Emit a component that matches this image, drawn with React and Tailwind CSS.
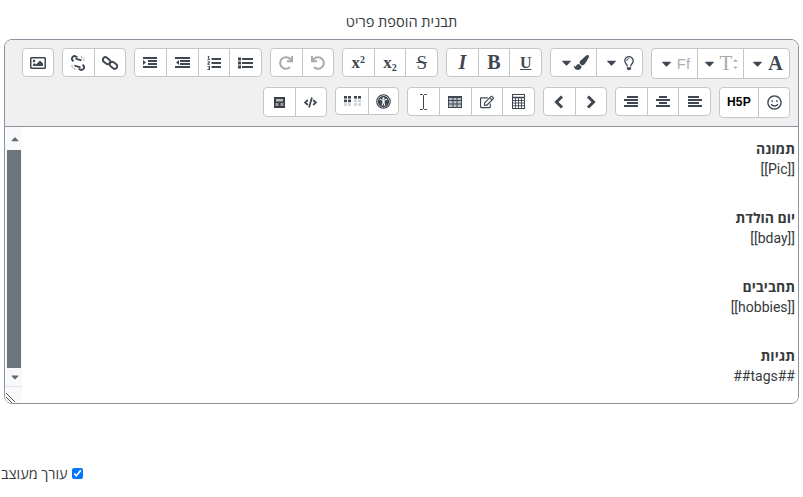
import React from "react";
import {
  FaRegImage, FaRedo, FaUndo,
  FaPaintBrush, FaRegLightbulb, FaRegSmile, FaRegEdit, FaCode, FaCaretDown, FaCaretUp, FaUniversalAccess,
} from "react-icons/fa";

const ink = "text-[#3f4752]";
const C = "#3f4752";

function Group({ w, h, children }) {
  return (
    <div className={`flex ${w} ${h} shrink-0 overflow-hidden rounded-[4px] border border-[#c6c6c6] bg-white ${ink}`}>
      {children}
    </div>
  );
}

function Btn({ children, className = "flex-1", first }) {
  return (
    <div className={`flex items-center justify-center gap-[3px] ${className} ${first ? "" : "border-l border-[#c6c6c6]"}`}>
      {children}
    </div>
  );
}

const Caret = () => <FaCaretDown className="text-[15px]" />;

function Bars({ bars, w = 14, h = 11, extra }) {
  return (
    <svg width={w} height={h} viewBox={`0 0 ${w} ${h}`} fill={C}>
      {bars.map(([x, y, bw], i) => (
        <rect key={i} x={x} y={y} width={bw} height="2" />
      ))}
      {extra}
    </svg>
  );
}

const AlignRight = () => <Bars bars={[[3, 0, 11], [0, 3, 14], [3, 6, 11], [0, 9, 14]]} />;
const AlignCenter = () => <Bars bars={[[3, 0, 8], [0, 3, 14], [3, 6, 8], [0, 9, 14]]} />;
const AlignLeft = () => <Bars bars={[[0, 0, 11], [0, 3, 14], [0, 6, 11], [0, 9, 14]]} />;
const Indent = () => <Bars bars={[[0, 0, 14], [5, 3, 9], [5, 6, 9], [0, 9, 14]]} extra={<path d="M0 3l3 2.5L0 8z" />} />;
const Outdent = () => <Bars bars={[[0, 0, 15], [5, 3, 10], [5, 6, 10], [0, 9, 15]]} w={15} extra={<path d="M4 3L1 5.5 4 8z" />} />;
const ListUl = () => (
  <Bars w={15} bars={[[4, 1, 11], [4, 5, 11], [4, 9, 11]]} extra={<><rect x="0" y="0.5" width="3" height="3" /><rect x="0" y="4.5" width="3" height="3" /><rect x="0" y="8.5" width="3" height="3" /></>} h={12} />
);
const ListOl = () => (
  <svg width="14" height="14" viewBox="0 0 14 14" fill={C}>
    <rect x="4.5" y="2" width="9.5" height="2" /><rect x="4.5" y="6" width="9.5" height="2" /><rect x="4.5" y="10" width="9.5" height="2" />
    <path d="M1 0h1.2v3.2H3V4H.4v-.8h.8V1H.6zM.4 5.2h2.6v1.2L1.6 8H3v.8H.4v-1L2 6H.4zM.4 10h2.6v4H.4v-.8H2V12.4H1v-.7h1V10.8H.4z" />
  </svg>
);

function Chain({ broken }) {
  return (
    <svg width="16" height="16" viewBox="0 0 16 16" fill="none" stroke={C} strokeWidth="1.9">
      {broken ? (
        <>
          <path d="M7.4 2.2 6 1.6a2.6 2.6 0 0 0-3.6 3.6l1 1.2" />
          <path d="M8.6 13.8l1.4.6a2.6 2.6 0 0 0 3.6-3.6l-1-1.2" />
          <path d="M5.5 3.6l6 1.8M4.5 10.6l6 1.8" strokeWidth="1.7" />
          <path d="M11.5 1v2M14 2.5l-1.5 1.5M15 5h-2M1 11h2M2 13.5 3.5 12M4.5 15v-2" stroke="#a9a9a9" strokeWidth="1" />
        </>
      ) : (
        <>
          <rect x="0.5" y="3.2" width="8" height="5" rx="2.5" transform="rotate(40 4.5 5.7)" />
          <rect x="7.5" y="7.8" width="8" height="5" rx="2.5" transform="rotate(40 11.5 10.3)" />
        </>
      )}
    </svg>
  );
}

function Table() {
  return (
    <svg width="14" height="12" viewBox="0 0 14 12" fill="none" stroke={C}>
      <rect x="0.5" y="0.5" width="13" height="11" fill="#bcc0c6" />
      <path d="M0 1h14" strokeWidth="2" />
      <path d="M.5 4.5h13M.5 8h13M5 2v9M9 2v9" />
    </svg>
  );
}

function Calculator() {
  return (
    <svg width="13" height="15" viewBox="0 0 13 15" fill="none" stroke={C}>
      <rect x="0.5" y="0.5" width="12" height="14" />
      <path d="M1 3.5h11" strokeWidth="1.4" />
      <path d="M.5 6.5h12M.5 9h12M.5 11.7h12M3.5 4v10M6.5 4v10M9.5 4v10" strokeWidth="0.9" />
    </svg>
  );
}

function Dots() {
  const cells = [];
  for (let r = 0; r < 3; r++) {
    for (const c of [0, 4, 10, 14]) {
      const dark = r === 0 || (r === 1 && c < 10);
      cells.push(<rect key={`${r}-${c}`} x={c} y={r * 3.6} width="3" height="2.6" fill={dark ? C : "#cfd2d6"} />);
    }
  }
  return <svg width="17" height="10" viewBox="0 0 17 10">{cells}</svg>;
}

function Cursor() {
  return (
    <svg width="9" height="16" viewBox="0 0 9 16" fill="none" stroke={C} strokeWidth="1">
      <path d="M1 .5h2.5L4.5 1.5 5.5.5H8M4.5 1.5v13M1 15.5h2.5l1-1 1 1H8" />
    </svg>
  );
}

function Files() {
  return (
    <svg width="11" height="11" viewBox="0 0 11 11">
      <rect width="11" height="11" fill="#3b3f45" />
      <rect x="2" y="2" width="7" height="2.5" fill="#b9bcc0" />
      <rect x="1.5" y="6" width="3" height="3" fill="#9a9da1" />
      <rect x="6.5" y="6" width="3" height="3" fill="#9a9da1" />
    </svg>
  );
}

function Chevron({ left }) {
  return (
    <svg width="10" height="14" viewBox="0 0 10 14" fill="none" stroke={C} strokeWidth="3">
      <path d={left ? "M8 1.5 2.5 7 8 12.5" : "M2 1.5 7.5 7 2 12.5"} />
    </svg>
  );
}

function Block({ title, value, last }) {
  return (
    <div className={last ? "" : "mb-[27px]"}>
      <div className="h-[21px] pt-px font-bold">{title}</div>
      <div className="h-[21px]">{value}</div>
    </div>
  );
}

export default function App() {
  return (
    <div className="h-[497px] w-[803px] overflow-hidden bg-white text-[14px] leading-[21px] text-[#373a3c] [font-family:'Roboto','Open_Sans',sans-serif]">
      <div dir="rtl" className="h-[39px] pt-3 text-center text-[14.6px]">תבנית הוספת פריט</div>

      <div className="ml-1 h-[365px] w-[795px] overflow-hidden rounded-lg border border-[#8f929c]">
        <div className="flex h-[87px] flex-col gap-2 border-b border-[#8f929c] bg-[#f0f0f0] px-2 pt-2">
          <div className="flex h-[31px] items-start justify-end gap-2">
            <Group w="w-8" h="h-[29px]"><Btn first><FaRegImage className="text-[16px]" /></Btn></Group>
            <Group w="w-16" h="h-[29px]">
              <Btn first><Chain broken /></Btn>
              <Btn><Chain /></Btn>
            </Group>
            <Group w="w-32" h="h-[29px]">
              <Btn first><Indent /></Btn>
              <Btn><Outdent /></Btn>
              <Btn><ListOl /></Btn>
              <Btn><ListUl /></Btn>
            </Group>
            <Group w="w-16" h="h-[29px]">
              <Btn first><FaRedo className="text-[14px] text-[#a9a9a9]" /></Btn>
              <Btn><FaUndo className="text-[14px] text-[#a9a9a9]" /></Btn>
            </Group>
            <Group w="w-24" h="h-[29px]">
              <Btn first><span className="font-bold [font-family:'Liberation_Serif',serif] text-[17px]">x<sup className="text-[10px]">2</sup></span></Btn>
              <Btn><span className="font-bold [font-family:'Liberation_Serif',serif] text-[17px]">x<sub className="text-[10px]">2</sub></span></Btn>
              <Btn><span className="text-[19px] line-through [font-family:'Liberation_Serif',serif]">S</span></Btn>
            </Group>
            <Group w="w-24" h="h-[29px]">
              <Btn first><span className="text-[20px] font-bold italic [font-family:'Liberation_Serif',serif]">I</span></Btn>
              <Btn><span className="text-[20px] font-bold [font-family:'Liberation_Serif',serif]">B</span></Btn>
              <Btn><span className="text-[16px] font-bold underline [font-family:'Liberation_Serif',serif]">U</span></Btn>
            </Group>
            <Group w="w-[93px]" h="h-[29px]">
              <Btn first><Caret /><FaPaintBrush className="-ml-[3px] text-[15px]" /></Btn>
              <Btn><Caret /><FaRegLightbulb className="text-[14px]" /></Btn>
            </Group>
            <Group w="w-[139px]" h="h-[31px]">
              <Btn first><Caret /><span className="text-[15px] text-[#b0b0b0] [font-family:'Liberation_Sans',sans-serif]">Ff</span></Btn>
              <Btn><Caret /><span className="text-[21px] text-[#a9a9a9] [font-family:'Liberation_Serif',serif]">T</span><span className="-ml-[3px] flex flex-col text-[7px] text-[#a9a9a9]"><FaCaretUp /><FaCaretDown /></span></Btn>
              <Btn><Caret /><span className="text-[20px] font-bold [font-family:'Liberation_Serif',serif]">A</span></Btn>
            </Group>
          </div>
          <div className="flex h-[31px] items-start justify-end gap-2">
            <Group w="w-16" h="h-[30px]">
              <Btn first><Files /></Btn>
              <Btn><FaCode className="text-[13px]" /></Btn>
            </Group>
            <Group w="w-16" h="h-[28px]">
              <Btn first className="w-[32px]"><Dots /></Btn>
              <Btn className="flex-1"><FaUniversalAccess className="text-[15px]" /></Btn>
            </Group>
            <Group w="w-32" h="h-[29px]">
              <Btn first><Cursor /></Btn>
              <Btn><Table /></Btn>
              <Btn><FaRegEdit className="text-[14px]" /></Btn>
              <Btn><Calculator /></Btn>
            </Group>
            <Group w="w-16" h="h-[29px]">
              <Btn first><Chevron left /></Btn>
              <Btn><Chevron /></Btn>
            </Group>
            <Group w="w-24" h="h-[29px]">
              <Btn first><AlignRight /></Btn>
              <Btn><AlignCenter /></Btn>
              <Btn><AlignLeft /></Btn>
            </Group>
            <Group w="w-[71px]" h="h-[31px]">
              <Btn first className="w-[38px]"><span className="text-[12px] font-bold tracking-[0.3px] text-black [font-family:'Liberation_Sans',sans-serif]">H5P</span></Btn>
              <Btn className="flex-1"><FaRegSmile className="text-[15px]" /></Btn>
            </Group>
          </div>
        </div>

        <div className="flex h-[276px] bg-white">
          <div className="flex w-[17px] shrink-0 flex-col bg-[#f8f9fb]">
            <div className="flex h-[23px] items-center justify-center pl-[3px] text-[12px] text-[#5f6670]"><FaCaretUp /></div>
            <div className="ml-[2px] h-[218px] w-[14px] bg-[#6c757d]" />
            <div className="flex h-[18px] items-center justify-center pl-[3px] text-[12px] text-[#5f6670]"><FaCaretDown /></div>
            <div className="mt-auto flex h-[17px] items-end border-t border-[#e3e4e6]">
              <svg width="14" height="14" viewBox="0 0 14 14" stroke="#555" strokeWidth="1">
                <path d="M1 4l9 9M1 8l6 6M1 12l2 2" />
              </svg>
            </div>
          </div>
          <div dir="rtl" className="flex-1 pr-[3px] pt-[11px]">
            <Block title="תמונה" value="[[Pic]]" />
            <Block title="יום הולדת" value="[[bday]]" />
            <Block title="תחביבים" value="[[hobbies]]" />
            <Block title="תגיות" value="##tags##" last />
          </div>
        </div>
      </div>

      <div className="mt-[59px] flex h-[21px] w-[83px] items-center justify-between pl-px">
        <span dir="rtl" className="pt-[2px] text-[14.4px]">עורך מעוצב</span>
        <input type="checkbox" defaultChecked className="h-[11px] w-[11px] accent-[#0075ff]" />
      </div>
    </div>
  );
}
